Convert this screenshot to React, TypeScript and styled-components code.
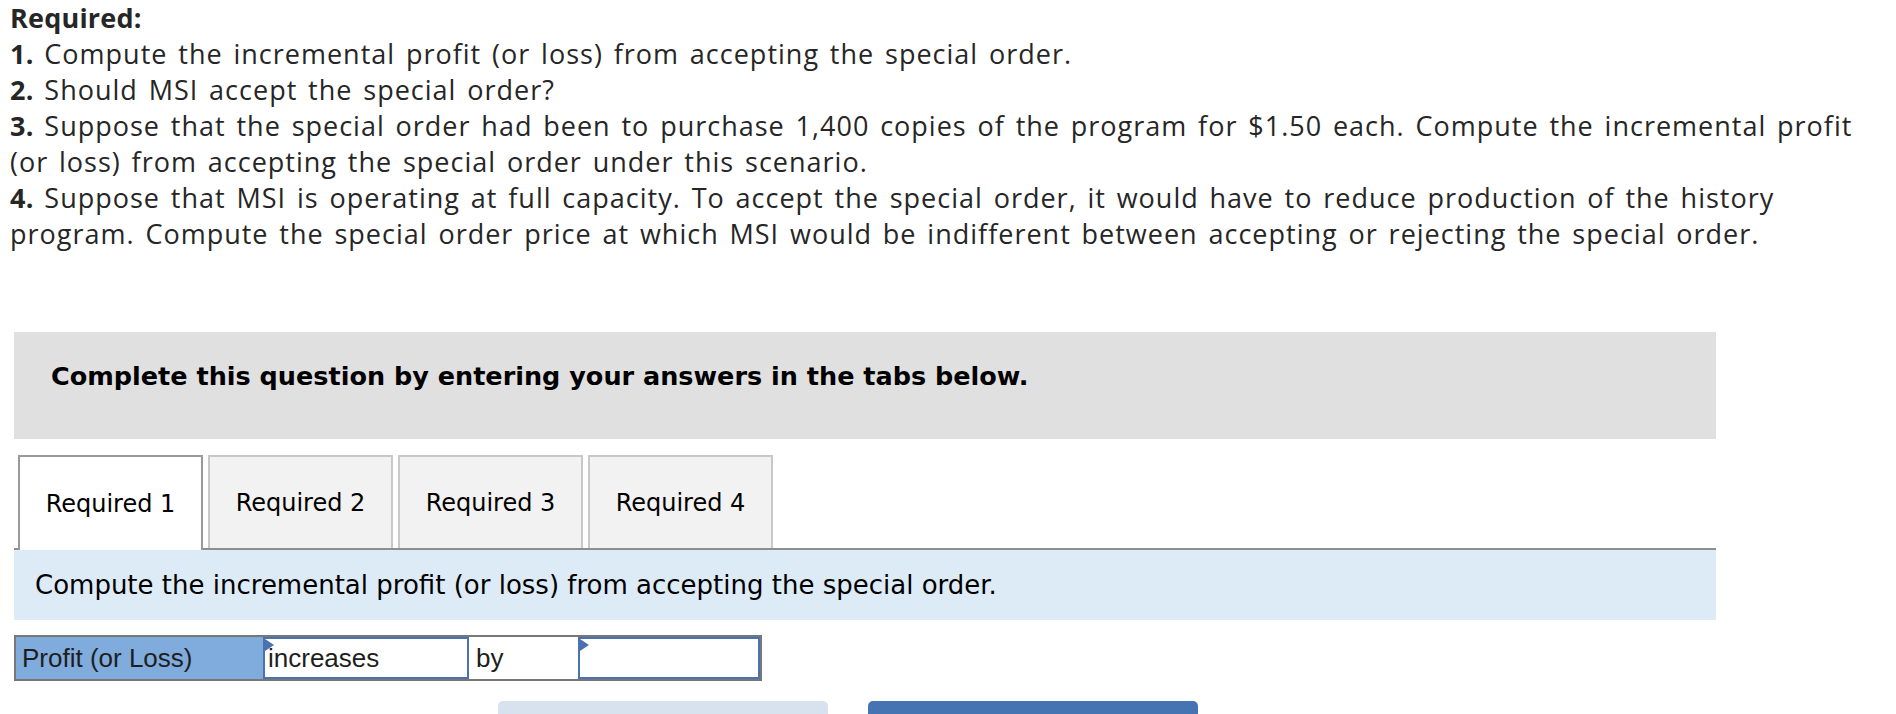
import React from "react";
import styled, { createGlobalStyle } from "styled-components";

const GlobalStyle = createGlobalStyle`
  html, body {
    margin: 0;
    padding: 0;
    background: #ffffff;
  }
  body {
    font-family: "Open Sans", "Liberation Sans", sans-serif;
  }
`;

const Page = styled.div`
  padding: 0 0 0 14px;
  width: 1882px;
  overflow: hidden;
`;

const Instructions = styled.div`
  color: #262626;
  font-family: "Open Sans", "Liberation Sans", sans-serif;
  font-size: 27px;
  line-height: 36px;
  letter-spacing: 1px;
  word-spacing: 2.8px;
  margin-left: -4px;
  white-space: nowrap;
`;

const Heading = styled.div`
  font-weight: 700;
  letter-spacing: 0.2px;
`;

const Item = styled.div``;

const Num = styled.b`
  font-weight: 700;
  letter-spacing: 0.2px;
`;

const Prompt = styled.div`
  margin-top: 80px;
  width: 1702px;
  height: 107px;
  background: #e0e0e0;
  box-sizing: border-box;
  padding: 29px 0 0 37px;
  font-family: "DejaVu Sans", Verdana, sans-serif;
  font-weight: 700;
  font-size: 25.5px;
  line-height: 30px;
  color: #000;
`;

const TabBar = styled.div`
  display: flex;
  gap: 5px;
  margin-top: 16px;
  padding-left: 4px;
  width: 1702px;
  box-sizing: border-box;
  border-bottom: 2px solid #8e8e8e;
`;

const Tab = styled.div<{ $active?: boolean }>`
  width: 185px;
  box-sizing: border-box;
  display: flex;
  align-items: center;
  justify-content: center;
  font-family: "DejaVu Sans", Verdana, sans-serif;
  font-size: 24px;
  color: #000;
  background: ${({ $active }) => ($active ? "#ffffff" : "#f2f2f2")};
  border: 2px solid ${({ $active }) => ($active ? "#9a9a9a" : "#c8c8c8")};
  border-bottom: none;
  margin-bottom: ${({ $active }) => ($active ? "-2px" : "0")};
  height: ${({ $active }) => ($active ? "95px" : "93px")};
`;

const TaskBar = styled.div`
  width: 1702px;
  height: 70px;
  background: #ddebf7;
  box-sizing: border-box;
  padding-left: 21px;
  display: flex;
  align-items: center;
  font-family: "DejaVu Sans", Verdana, sans-serif;
  font-size: 26px;
  color: #000;
`;

const AnswerRow = styled.div`
  margin-top: 15px;
  display: flex;
  width: 748px;
  height: 46px;
  box-sizing: border-box;
  border: 2px solid #777777;
  font-family: "Liberation Sans", Arial, sans-serif;
  font-size: 26px;
  color: #1e1e1e;
`;

const Label = styled.div`
  width: 247px;
  background: #80abdd;
  display: flex;
  align-items: center;
  padding-left: 6px;
  box-sizing: border-box;
`;

const Field = styled.div<{ $w: number }>`
  position: relative;
  width: ${({ $w }) => $w}px;
  border: 2px solid #4a72b0;
  box-sizing: border-box;
  background: #fff;
  display: flex;
  align-items: center;
  padding-left: 3px;
  &::before {
    content: "";
    position: absolute;
    left: 0;
    top: 0;
    border-top: 6px solid transparent;
    border-bottom: 6px solid transparent;
    border-left: 9px solid #4a72b0;
  }
`;

const Word = styled.div`
  width: 109px;
  display: flex;
  align-items: center;
  padding-left: 7px;
  box-sizing: border-box;
  background: #fff;
`;

const Buttons = styled.div`
  display: flex;
  gap: 40px;
  margin-top: 20px;
  padding-left: 484px;
`;

const Button = styled.div<{ $primary?: boolean }>`
  width: 330px;
  height: 44px;
  border-radius: 5px;
  background: ${({ $primary }) => ($primary ? "#4674b3" : "#d8e2ef")};
`;

export default function App() {
  return (
    <>
      <GlobalStyle />
      <Page>
        <Instructions>
          <Heading>Required:</Heading>
          <Item>
            <Num>1.</Num> Compute the incremental profit (or loss) from accepting the special order.
          </Item>
          <Item>
            <Num>2.</Num> Should MSI accept the special order?
          </Item>
          <Item>
            <Num>3.</Num> Suppose that the special order had been to purchase 1,400 copies of the program for $1.50 each. Compute the incremental profit
            <br />
            (or loss) from accepting the special order under this scenario.
          </Item>
          <Item>
            <Num>4.</Num> Suppose that MSI is operating at full capacity. To accept the special order, it would have to reduce production of the history
            <br />
            program. Compute the special order price at which MSI would be indifferent between accepting or rejecting the special order.
          </Item>
        </Instructions>

        <Prompt>Complete this question by entering your answers in the tabs below.</Prompt>

        <TabBar>
          <Tab $active>Required 1</Tab>
          <Tab>Required 2</Tab>
          <Tab>Required 3</Tab>
          <Tab>Required 4</Tab>
        </TabBar>

        <TaskBar>Compute the incremental profit (or loss) from accepting the special order.</TaskBar>

        <AnswerRow>
          <Label>Profit (or Loss)</Label>
          <Field $w={206}>increases</Field>
          <Word>by</Word>
          <Field $w={182} />
        </AnswerRow>

        <Buttons>
          <Button />
          <Button $primary />
        </Buttons>
      </Page>
    </>
  );
}
